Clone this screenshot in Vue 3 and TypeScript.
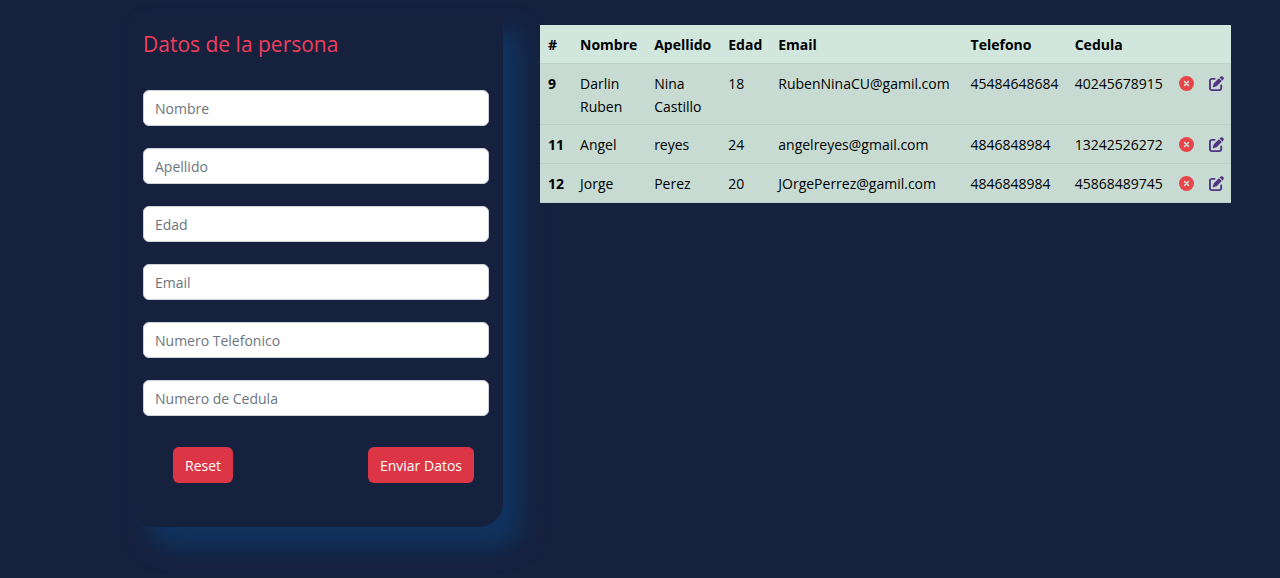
<script setup lang="ts">
import { reactive, ref } from 'vue'

interface Persona {
  id: number
  nombre: string
  apellido: string
  edad: string
  email: string
  telefono: string
  cedula: string
}

type Campo = Exclude<keyof Persona, 'id'>

const campos: { clave: Campo; etiqueta: string; tipo: string }[] = [
  { clave: 'nombre', etiqueta: 'Nombre', tipo: 'text' },
  { clave: 'apellido', etiqueta: 'Apellido', tipo: 'text' },
  { clave: 'edad', etiqueta: 'Edad', tipo: 'text' },
  { clave: 'email', etiqueta: 'Email', tipo: 'email' },
  { clave: 'telefono', etiqueta: 'Numero Telefonico', tipo: 'tel' },
  { clave: 'cedula', etiqueta: 'Numero de Cedula', tipo: 'text' },
]

const vacio = (): Omit<Persona, 'id'> => ({
  nombre: '', apellido: '', edad: '', email: '', telefono: '', cedula: '',
})

const datos = reactive(vacio())
const editando = ref<number | null>(null)

const personas = ref<Persona[]>([
  { id: 9, nombre: 'Darlin Ruben', apellido: 'Nina Castillo', edad: '18', email: 'RubenNinaCU@gamil.com', telefono: '45484648684', cedula: '40245678915' },
  { id: 11, nombre: 'Angel', apellido: 'reyes', edad: '24', email: 'angelreyes@gmail.com', telefono: '4846848984', cedula: '13242526272' },
  { id: 12, nombre: 'Jorge', apellido: 'Perez', edad: '20', email: 'JOrgePerrez@gamil.com', telefono: '4846848984', cedula: '45868489745' },
])

function limpiar() {
  Object.assign(datos, vacio())
  editando.value = null
}

function enviar() {
  if (editando.value !== null) {
    personas.value = personas.value.map((p) => (p.id === editando.value ? { ...datos, id: p.id } : p))
  } else {
    const id = Math.max(0, ...personas.value.map((p) => p.id)) + 1
    personas.value.push({ ...datos, id })
  }
  limpiar()
}

function borrar(id: number) {
  personas.value = personas.value.filter((p) => p.id !== id)
}

function editar(persona: Persona) {
  const { id, ...resto } = persona
  Object.assign(datos, resto)
  editando.value = id
}
</script>

<template>
  <main class="page">
    <form class="card" @submit.prevent="enviar" @reset.prevent="limpiar">
      <h1 class="title">Datos de la persona</h1>
      <div class="fields">
        <input
          v-for="campo in campos"
          :key="campo.clave"
          v-model="datos[campo.clave]"
          class="field"
          :type="campo.tipo"
          :name="campo.clave"
          :placeholder="campo.etiqueta"
          :aria-label="campo.etiqueta"
        />
      </div>
      <div class="actions">
        <button class="btn" type="reset">Reset</button>
        <button class="btn" type="submit">Enviar Datos</button>
      </div>
    </form>

    <section class="list">
      <table class="table">
        <colgroup>
          <col class="c-id" />
          <col class="c-name" />
          <col class="c-name" />
          <col class="c-age" />
          <col class="c-email" />
          <col class="c-number" />
          <col class="c-number" />
          <col class="c-icon" />
          <col class="c-icon" />
        </colgroup>
        <thead>
          <tr>
            <th scope="col">#</th>
            <th scope="col">Nombre</th>
            <th scope="col">Apellido</th>
            <th scope="col">Edad</th>
            <th scope="col">Email</th>
            <th scope="col">Telefono</th>
            <th scope="col">Cedula</th>
            <td></td>
            <td></td>
          </tr>
        </thead>
        <tbody>
          <tr v-for="persona in personas" :key="persona.id">
            <th scope="row">{{ persona.id }}</th>
            <td>{{ persona.nombre }}</td>
            <td>{{ persona.apellido }}</td>
            <td>{{ persona.edad }}</td>
            <td>{{ persona.email }}</td>
            <td>{{ persona.telefono }}</td>
            <td>{{ persona.cedula }}</td>
            <td>
              <button class="icon delete" type="button" aria-label="Borrar" @click="borrar(persona.id)">
                <svg viewBox="0 0 512 512" width="15" height="15" aria-hidden="true">
                  <circle cx="256" cy="256" r="256" fill="currentColor" />
                  <path d="M190 190 L322 322 M322 190 L190 322" fill="none" stroke="#c7dbd2" stroke-width="54" stroke-linecap="round" />
                </svg>
              </button>
            </td>
            <td>
              <button class="icon edit" type="button" aria-label="Editar" @click="editar(persona)">
                <svg viewBox="0 0 512 512" width="15" height="15" aria-hidden="true">
                  <path fill="currentColor" d="M471.600 21.700c-21.900-21.900-57.300-21.900-79.200 0L362.300 51.700l97.900 97.900 30.100-30.100c21.900-21.900 21.900-57.300 0-79.200L471.600 21.700zm-299.200 220c-6.100 6.100-10.800 13.600-13.500 21.900l-29.600 88.800c-2.900 8.600-.6 18.100 5.800 24.600s15.900 8.700 24.600 5.800l88.800-29.600c8.200-2.700 15.700-7.400 21.900-13.500L437.700 172.300 339.700 74.300 172.400 241.700zM96 64C43 64 0 107 0 160V416c0 53 43 96 96 96H352c53 0 96-43 96-96V320c0-17.700-14.300-32-32-32s-32 14.300-32 32v96c0 17.700-14.300 32-32 32H96c-17.700 0-32-14.300-32-32V160c0-17.700 14.300-32 32-32h96c17.700 0 32-14.300 32-32s-14.300-32-32-32H96z" />
                </svg>
              </button>
            </td>
          </tr>
        </tbody>
      </table>
    </section>
  </main>
</template>

<style>
body {
  margin: 0;
  background: #16213e;
}
</style>

<style scoped>
.page {
  display: grid;
  grid-template-columns: 373fr 691fr;
  column-gap: 37px;
  align-items: start;
  padding: 12px 49px 48px 130px;
  font-family: "Segoe UI", "Open Sans", "Noto Sans", sans-serif;
  font-size: 14px;
  line-height: 23px;
}

.card {
  padding: 18px 14px 44px 13px;
  border-radius: 0 0 24px 24px;
  background: #16213e;
  box-shadow: 18px 20px 24px #0f3460;
}

.title {
  margin: 0;
  color: #f03e5c;
  font-size: 21px;
  font-weight: 400;
  line-height: 28px;
}

.fields {
  display: grid;
  gap: 22px;
  margin-top: 32px;
}

.field {
  box-sizing: border-box;
  width: 100%;
  height: 36px;
  padding: 0 11px;
  border: 1px solid #ced4da;
  border-radius: 6px;
  background: #fff;
  color: #212529;
  font: inherit;
}

.field::placeholder {
  color: #6c757d;
  opacity: 1;
}

.actions {
  display: flex;
  justify-content: space-between;
  margin-top: 31px;
  padding: 0 15px 0 30px;
}

.btn {
  height: 36px;
  padding: 0 12px;
  border: 0;
  border-radius: 6px;
  background: #dc3545;
  color: #fff;
  font: inherit;
  cursor: pointer;
}

.list {
  padding-top: 13px;
}

.table {
  width: 100%;
  table-layout: fixed;
  border-collapse: separate;
  border-spacing: 0;
  background: #d1e7dd;
  color: #000;
}

.table th,
.table td {
  padding: 8px;
  text-align: left;
  vertical-align: top;
  box-shadow: inset 0 -1px #bcd0c7;
}

.table tbody th,
.table tbody td {
  background: #c7dbd2;
}

.table tbody tr:first-child th,
.table tbody tr:first-child td {
  padding-bottom: 7px;
}

.c-id { width: 32px; }
.c-name { width: 74px; }
.c-age { width: 50px; }
.c-email { width: 192px; }
.c-number { width: 104px; }
.c-icon { width: 30px; }

.icon {
  display: flex;
  align-items: center;
  height: 22px;
  padding: 0;
  border: 0;
  background: none;
  cursor: pointer;
}

.delete { color: #e94548; }
.edit { color: #533483; }
</style>
